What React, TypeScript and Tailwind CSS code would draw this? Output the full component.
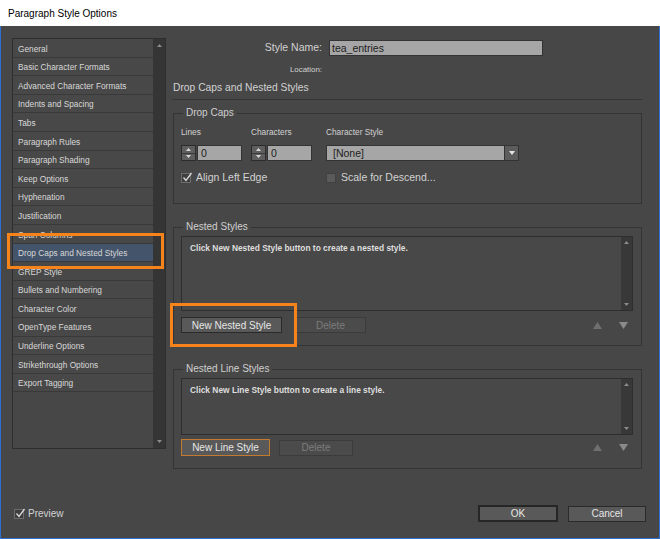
import React from 'react';

const sections = [
  'General',
  'Basic Character Formats',
  'Advanced Character Formats',
  'Indents and Spacing',
  'Tabs',
  'Paragraph Rules',
  'Paragraph Shading',
  'Keep Options',
  'Hyphenation',
  'Justification',
  'Span Columns',
  'Drop Caps and Nested Styles',
  'GREP Style',
  'Bullets and Numbering',
  'Character Color',
  'OpenType Features',
  'Underline Options',
  'Strikethrough Options',
  'Export Tagging',
];

const Tri: React.FC<{ dir: 'up' | 'down'; w?: number; h?: number; color?: string }> = ({ dir, w = 6, h = 4, color = '#8c8c8c' }) => (
  <svg width={w} height={h} viewBox={`0 0 ${w} ${h}`} className="block">
    {dir === 'up' ? (
      <polygon points={`0,${h} ${w},${h} ${w / 2},0`} fill={color} />
    ) : (
      <polygon points={`0,0 ${w},0 ${w / 2},${h}`} fill={color} />
    )}
  </svg>
);

const CheckBox: React.FC<{ checked?: boolean }> = ({ checked }) =>
  checked ? (
    <div className="relative w-[10px] h-[10px] border border-[#6c6c6c] bg-[#3e3e3e]">
      <svg width="11" height="11" viewBox="0 0 11 11" className="absolute -top-[2px] left-[0px]">
        <polyline points="1.5,5.5 4,8.5 9.5,1" fill="none" stroke="#dcdcdc" strokeWidth="1.3" />
      </svg>
    </div>
  ) : (
    <div className="w-[10px] h-[10px] border border-[#404040] bg-[#5a5a5a]" />
  );

const Spinner: React.FC<{ value: string }> = ({ value }) => (
  <div className="flex h-[16px] gap-px">
    <div className="w-[15px] h-full border border-[#2c2c2c] bg-[#5e5e5e] flex flex-col">
      <div className="flex-1 flex items-center justify-center border-b border-[#3a3a3a]">
        <Tri dir="up" w={5} h={3} color="#d8d8d8" />
      </div>
      <div className="flex-1 flex items-center justify-center">
        <Tri dir="down" w={5} h={3} color="#d8d8d8" />
      </div>
    </div>
    <div className="w-[45px] h-full border border-[#333] bg-[#a6a6a6] pl-[3px] text-[10.5px] leading-[14px] text-[#1e1e1e]">
      {value}
    </div>
  </div>
);

const ListBox: React.FC<{ h: string; text: string }> = ({ h, text }) => (
  <div className={`flex w-[452px] ${h} border border-[#2e2e2e] bg-[#484848]`}>
    <div className="flex-1 pl-[8px] pt-[5px] text-[8.4px] font-bold text-[#dedede]">{text}</div>
    <div className="w-[11px] h-full bg-[#383838] flex flex-col items-center justify-between py-[4px]">
      <Tri dir="up" w={5} h={3} />
      <Tri dir="down" w={5} h={3} />
    </div>
  </div>
);

const Button: React.FC<{ label: string; className?: string; disabled?: boolean }> = ({ label, className = '', disabled }) => (
  <div
    className={`flex items-center justify-center text-[10px] ${
      disabled ? 'bg-[#4b4b4b] border border-[#3b3b3b] text-[#7c7c7c]' : 'bg-[#595959] border border-[#2a2a2a] text-[#e6e6e6]'
    } ${className}`}
  >
    {label}
  </div>
);

const MoveArrows: React.FC = () => (
  <div className="ml-auto mr-[13px] flex items-center gap-[17px]">
    <Tri dir="up" w={9} h={7} color="#6f6f6f" />
    <Tri dir="down" w={9} h={7} color="#8a8a8a" />
  </div>
);

const Group: React.FC<{ title: string; className: string; children: React.ReactNode }> = ({ title, className, children }) => (
  <div className={`relative border border-[#343434] pl-[7px] ${className}`}>
    <span className="absolute -top-[7px] left-[9px] px-[3px] bg-[#474747] text-[10px] leading-[12px] text-[#cfcfcf]">
      {title}
    </span>
    {children}
  </div>
);

export default function App() {
  return (
    <div className="relative w-[660px] h-[539px] flex flex-col font-['Liberation_Sans',Arial,sans-serif]">
      <div className="h-[26px] bg-white flex items-center pl-[8px] text-[10px] text-black">Paragraph Style Options</div>

      <div className="flex-1 flex flex-col bg-[#474747] border-x border-b border-[#2f6fd0]">
        <div className="flex pt-[12px] pl-[11px]">
          {/* section list */}
          <div className="w-[154px] h-[411px] border border-[#2e2e2e] flex">
            <div className="w-[140px]">
              {sections.map((s) => (
                <div
                  key={s}
                  className={`h-[18.6px] border-b border-[#393939] pl-[5px] pt-[2px] flex items-center text-[8.3px] text-[#d8d8d8] ${
                    s === 'Drop Caps and Nested Styles' ? 'bg-[#44546a]' : 'bg-[#484848]'
                  }`}
                >
                  {s}
                </div>
              ))}
            </div>
            <div className="flex-1 bg-[#353535] flex flex-col items-center justify-between py-[5px]">
              <Tri dir="up" w={5} h={3} />
              <Tri dir="down" w={5} h={3} />
            </div>
          </div>

          {/* settings */}
          <div className="ml-[7px] w-[469px] flex flex-col text-[#d2d2d2]">
            <div className="mt-[2px] h-[16px] flex items-center">
              <div className="w-[149px] text-right text-[10.5px]">Style Name:</div>
              <div className="ml-[7px] w-[214px] h-full border border-[#333] bg-[#a6a6a6] pl-[2px] text-[10.5px] leading-[14px] text-[#1e1e1e]">
                tea_entries
              </div>
            </div>
            <div className="mt-[9px] h-[10px] flex items-center">
              <div className="w-[149px] text-right text-[7.9px]">Location:</div>
            </div>
            <div className="mt-[6px] h-[14px] flex items-center text-[10.3px]">Drop Caps and Nested Styles</div>
            <div className="mt-[4px] -ml-px h-px bg-[#353535]" />

            <Group title="Drop Caps" className="mt-[13px] h-[91px] w-[469px]">
              <div className="pt-[13px] flex">
                <div className="w-[70px] flex flex-col">
                  <div className="h-[10px] flex items-center text-[8.3px]">Lines</div>
                  <div className="mt-[8px]">
                    <Spinner value="0" />
                  </div>
                </div>
                <div className="w-[75px] flex flex-col">
                  <div className="h-[10px] flex items-center text-[8.3px]">Characters</div>
                  <div className="mt-[8px]">
                    <Spinner value="0" />
                  </div>
                </div>
                <div className="flex flex-col">
                  <div className="h-[10px] flex items-center text-[8.3px]">Character Style</div>
                  <div className="mt-[8px] w-[193px] h-[16px] flex border border-[#333]">
                    <div className="flex-1 bg-[#a6a6a6] pl-[6px] text-[10.5px] leading-[14px] text-[#1e1e1e]">[None]</div>
                    <div className="w-[14px] bg-[#5c5c5c] border-l border-[#333] flex items-center justify-center">
                      <Tri dir="down" w={6} h={4} color="#e6e6e6" />
                    </div>
                  </div>
                </div>
              </div>
              <div className="mt-[11px] h-[12px] flex items-center text-[10.5px]">
                <div className="w-[145px] flex items-center gap-[5px]">
                  <CheckBox checked />
                  <span>Align Left Edge</span>
                </div>
                <div className="flex items-center gap-[5px]">
                  <CheckBox />
                  <span>Scale for Descend...</span>
                </div>
              </div>
            </Group>

            <Group title="Nested Styles" className="mt-[23px] h-[119px] w-[469px]">
              <div className="mt-[8px]">
                <ListBox h="h-[75px]" text="Click New Nested Style button to create a nested style." />
              </div>
              <div className="mt-[6px] flex items-center">
                <Button label="New Nested Style" className="w-[101px] h-[16px]" />
                <Button label="Delete" disabled className="ml-[13px] w-[71px] h-[16px]" />
                <MoveArrows />
              </div>
            </Group>

            <Group title="Nested Line Styles" className="mt-[23px] h-[100px] w-[469px]">
              <div className="mt-[8px]">
                <ListBox h="h-[57px]" text="Click New Line Style button to create a line style." />
              </div>
              <div className="mt-[4px] flex items-center">
                <Button label="New Line Style" className="w-[89px] h-[17px] !border-[#c47a2e]" />
                <Button label="Delete" disabled className="ml-[9px] w-[74px] h-[16px]" />
                <MoveArrows />
              </div>
            </Group>
          </div>
        </div>

        <div className="mt-[36px] flex items-center pl-[13px] pr-[13px] h-[17px]">
          <div className="flex items-center gap-[4px] text-[10px] text-[#d2d2d2]">
            <CheckBox checked />
            <span>Preview</span>
          </div>
          <div className="ml-auto flex items-center gap-[10px]">
            <Button label="OK" className="w-[80px] h-[17px] !border-2 !border-[#262626]" />
            <Button label="Cancel" className="w-[78px] h-[16px]" />
          </div>
        </div>
      </div>

      {/* callout highlights */}
      <div className="absolute left-[7px] top-[233px] w-[157px] h-[36px] border-[3px] border-[#f7841a]" />
      <div className="absolute left-[170px] top-[303px] w-[127px] h-[44px] border-[3px] border-[#f7841a]" />
    </div>
  );
}
